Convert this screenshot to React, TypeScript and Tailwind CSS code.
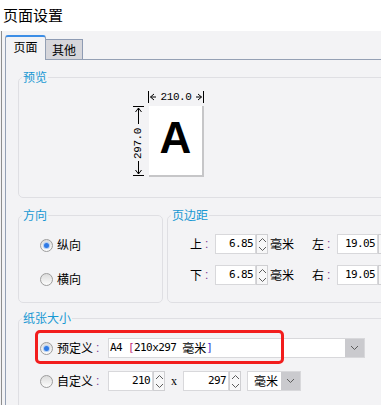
import React from "react";

function Chevron({ dir }: { dir: "up" | "down" }) {
  return (
    <svg width="9" height="6" viewBox="0 0 9 6" className="block">
      <path
        d={dir === "up" ? "M1 5 L4.5 1.5 L8 5" : "M1 1 L4.5 4.5 L8 1"}
        fill="none"
        stroke="#5c5c5c"
        strokeWidth="1"
      />
    </svg>
  );
}

function Spinner() {
  return (
    <div className="w-[12px] h-[20px] flex flex-col items-center justify-around bg-[#f7f7f8] border border-[#cfcfd2]">
      <Chevron dir="up" />
      <Chevron dir="down" />
    </div>
  );
}

function Radio({ checked }: { checked?: boolean }) {
  return (
    <div className="w-[13px] h-[13px] shrink-0 rounded-full border border-[#9d9d9d] bg-linear-to-b from-[#dcdcdc] to-[#fcfcfc] flex items-center justify-center">
      {checked && (
        <div className="w-[5px] h-[5px] rounded-full bg-[#2f7ae5] shadow-[0_0_0_1px_#b4cff3]" />
      )}
    </div>
  );
}

function Colon() {
  return <span className="ml-[3px] text-[#7b3d92] font-['Liberation_Sans',sans-serif]">:</span>;
}

function NumBox({ value, w }: { value: string; w: string }) {
  return (
    <div
      className={`${w} h-[20px] bg-white border border-[#d8d8db] flex items-center justify-end pr-[2px] font-['DejaVu_Sans_Mono',monospace] text-[11px] tracking-[-0.6px] text-black`}
    >
      {value}
    </div>
  );
}

function DropBtn() {
  return (
    <div className="w-[19px] h-full bg-[#cacace] flex items-center justify-center">
      <Chevron dir="down" />
    </div>
  );
}

export default function App() {
  return (
    <div className="w-[381px] h-[405px] overflow-hidden bg-[#f3f3f5] flex flex-col font-['Noto_Sans_CJK_SC',sans-serif] text-black">
      {/* title */}
      <div className="h-[31px] shrink-0 bg-white pl-[3px] pt-[5px] text-[15px] leading-[20px]">
        页面设置
      </div>

      {/* body */}
      <div className="flex-1 ml-[1px] border-l border-[#8e8e8e] pl-[3px] flex flex-col">
        {/* tabs */}
        <div className="h-[28px] shrink-0 flex items-end">
          <div className="relative z-10 -mb-[1px] w-[41px] h-[25px] bg-[#f3f3f5] border-t-2 border-t-[#3d8ee6] border-l border-r border-[#94a0b4] rounded-t-[3px] flex justify-center pt-[2px] text-[12px] leading-[16px]">
            页面
          </div>
          <div className="w-[37px] h-[20px] bg-[#d6d6db] border-t border-r border-[#8e9bb3] flex justify-center items-center text-[12px] leading-[16px]">
            其他
          </div>
        </div>

        {/* panel */}
        <div className="flex-1 border-t border-l border-[#94a0b4] pl-[12px] w-[420px]">
          {/* 预览 */}
          <fieldset className="mt-[10px] w-[400px] h-[128px] border border-[#dfdfe3] rounded-[5px]">
            <legend className="ml-[3px] px-[1px] text-[12px] leading-[14px] text-[#1798d3]">预览</legend>
            <div className="ml-[114px] mt-[7px] flex">
              {/* vertical dimension */}
              <div className="w-[11px] mt-[15px] h-[70px] flex flex-col items-center">
                <svg width="11" height="19" viewBox="0 0 11 19" className="block">
                  <line x1="0" y1="0.5" x2="11" y2="0.5" stroke="#000" />
                  <line x1="5.5" y1="2" x2="5.5" y2="18" stroke="#000" />
                  <path d="M2.5 6 L5.5 2 L8.5 6" fill="none" stroke="#000" />
                </svg>
                <span className="flex-1 flex items-center justify-center [writing-mode:vertical-rl] rotate-180 font-['Liberation_Mono',monospace] text-[11px] leading-[11px] tracking-[-0.4px]">
                  297.0
                </span>
                <svg width="11" height="15" viewBox="0 0 11 15" className="block">
                  <line x1="5.5" y1="0" x2="5.5" y2="13" stroke="#000" />
                  <path d="M2.5 9 L5.5 13 L8.5 9" fill="none" stroke="#000" />
                  <line x1="0" y1="14.5" x2="11" y2="14.5" stroke="#000" />
                </svg>
              </div>
              <div className="ml-[4px] flex flex-col">
                {/* horizontal dimension */}
                <div className="w-[56px] h-[12px] flex items-center justify-between">
                  <svg width="8" height="12" viewBox="0 0 8 12" className="block">
                    <line x1="0.5" y1="0" x2="0.5" y2="12" stroke="#000" />
                    <path d="M6 3 L2.5 6 L6 9" fill="none" stroke="#000" />
                    <line x1="2.5" y1="6" x2="8" y2="6" stroke="#000" />
                  </svg>
                  <span className="font-['Liberation_Mono',monospace] text-[11px] leading-[12px] tracking-[-0.4px]">
                    210.0
                  </span>
                  <svg width="8" height="12" viewBox="0 0 8 12" className="block">
                    <line x1="7.5" y1="0" x2="7.5" y2="12" stroke="#000" />
                    <path d="M2 3 L5.5 6 L2 9" fill="none" stroke="#000" />
                    <line x1="0" y1="6" x2="5.5" y2="6" stroke="#000" />
                  </svg>
                </div>
                <div className="mt-[3px] ml-[1px] w-[55px] h-[71px] bg-white border-r-2 border-b-2 border-[#c6c6c8] flex items-center justify-center pb-[5px]">
                  <span className="font-['Liberation_Sans',sans-serif] font-bold text-[44px] leading-[44px]">A</span>
                </div>
              </div>
            </div>
          </fieldset>

          {/* 方向 + 页边距 */}
          <div className="mt-[10px] flex gap-[4px]">
            <fieldset className="w-[145px] h-[95px] border border-[#dfdfe3] rounded-[5px]">
              <legend className="ml-[3px] px-[1px] text-[12px] leading-[14px] text-[#1798d3]">方向</legend>
              <div className="pl-[21px] mt-[16px] flex flex-col gap-[20px] text-[12px] leading-[14px]">
                <div className="flex items-center gap-[4px]">
                  <Radio checked />
                  <span>纵向</span>
                </div>
                <div className="flex items-center gap-[4px]">
                  <Radio />
                  <span>横向</span>
                </div>
              </div>
            </fieldset>

            <fieldset className="w-[250px] h-[95px] border border-[#dfdfe3] rounded-[5px]">
              <legend className="ml-[3px] px-[1px] text-[12px] leading-[14px] text-[#1798d3]">页边距</legend>
              <div className="pl-[22px] mt-[12px] flex flex-col gap-[11px] text-[12px] leading-[14px]">
                <div className="flex items-center">
                  <span className="w-[25px] flex">
                    上<Colon />
                  </span>
                  <NumBox value="6.85" w="w-[41px]" />
                  <Spinner />
                  <span className="ml-[2px]">毫米</span>
                  <span className="ml-[18px] w-[25px] flex">
                    左<Colon />
                  </span>
                  <NumBox value="19.05" w="w-[41px]" />
                  <Spinner />
                </div>
                <div className="flex items-center">
                  <span className="w-[25px] flex">
                    下<Colon />
                  </span>
                  <NumBox value="6.85" w="w-[41px]" />
                  <Spinner />
                  <span className="ml-[2px]">毫米</span>
                  <span className="ml-[18px] w-[25px] flex">
                    右<Colon />
                  </span>
                  <NumBox value="19.05" w="w-[41px]" />
                  <Spinner />
                </div>
              </div>
            </fieldset>
          </div>

          {/* 纸张大小 */}
          <fieldset className="mt-[8px] w-[400px] h-[110px] border border-[#dfdfe3] rounded-[5px]">
            <legend className="ml-[3px] px-[1px] text-[12px] leading-[14px] text-[#1798d3]">纸张大小</legend>
            <div className="pl-[21px] mt-[13px] flex flex-col gap-[13px] text-[12px] leading-[14px]">
              <div className="relative flex items-center h-[20px]">
                <Radio checked />
                <span className="ml-[4px] w-[51px] flex">
                  预定义<Colon />
                </span>
                <div className="w-[257px] h-[20px] flex border border-[#d8d8db] bg-white">
                  <div className="flex-1 flex items-center pl-[1px] font-['DejaVu_Sans_Mono','Noto_Sans_CJK_SC',monospace] text-[11px] tracking-[-0.6px]">
                    <span>A4</span>
                    <span className="ml-[6px] text-[#c0237a]">[</span>
                    <span>210x297</span>
                    <span className="ml-[6px] font-['Noto_Sans_CJK_SC',sans-serif] text-[12px] tracking-normal">毫米</span>
                    <span className="text-[#3a2bd0]">]</span>
                  </div>
                  <DropBtn />
                </div>
                <div className="absolute left-[-5px] top-[-8px] w-[249px] h-[34px] border-[3px] border-[#f21d1d] rounded-[5px] z-10" />
              </div>
              <div className="flex items-center h-[20px]">
                <Radio />
                <span className="ml-[4px] w-[51px] flex">
                  自定义<Colon />
                </span>
                <NumBox value="210" w="w-[45px]" />
                <Spinner />
                <span className="w-[18px] text-center font-['Liberation_Serif',serif] text-[12px]">x</span>
                <NumBox value="297" w="w-[46px]" />
                <Spinner />
                <div className="ml-[6px] w-[54px] h-[20px] flex border border-[#d8d8db] bg-white">
                  <div className="flex-1 flex items-center pl-[6px]">毫米</div>
                  <DropBtn />
                </div>
              </div>
            </div>
          </fieldset>
        </div>
      </div>
    </div>
  );
}
